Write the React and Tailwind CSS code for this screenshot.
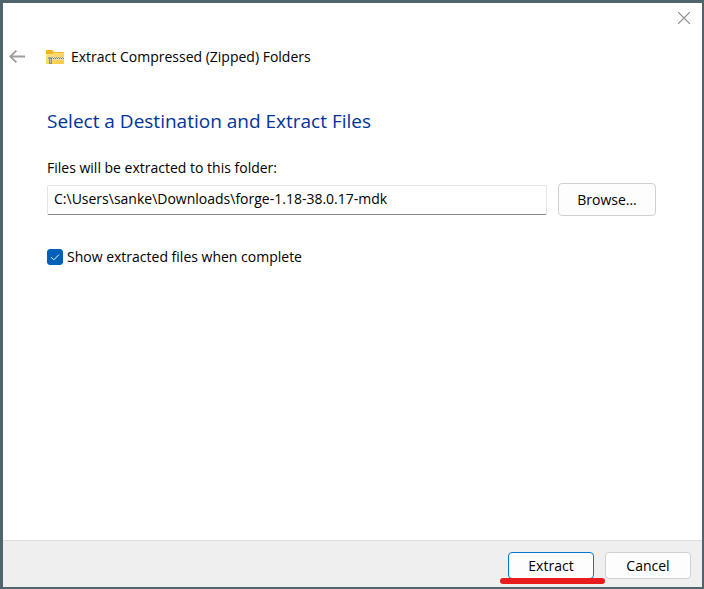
import React, { useState } from "react";

const ZipFolderIcon = () => (
  <svg width="18" height="15" viewBox="0 0 18 15" aria-hidden="true">
    <defs>
      <linearGradient id="folderFront" x1="0" y1="0" x2="1" y2="1">
        <stop offset="0" stopColor="#ffe38c" />
        <stop offset="1" stopColor="#fdc83c" />
      </linearGradient>
    </defs>
    <path d="M0 1Q0 0 1 0H6L8 2H17Q18 2 18 3V6H0Z" fill="#f3b226" />
    <path d="M0 4H6L8 3H18V13Q18 14 17 14H1Q0 14 0 13Z" fill="url(#folderFront)" />
    <path d="M6 7H18V10H6Z" fill="#e6dcb8" />
    <path d="M6 7.5H18" stroke="#a39c86" strokeWidth="1" strokeDasharray="1 1" />
    <path d="M7 8.5H18" stroke="#77746c" strokeWidth="1" strokeDasharray="1 1" />
    <path d="M2 7H6V9H2Z" fill="#a5a5a5" />
    <path d="M3 8H6V14H3Z" fill="#8b8b8b" />
    <path d="M4 9H5V13H4Z" fill="#c4c4c4" />
  </svg>
);

const BackArrow = () => (
  <svg width="16" height="14" viewBox="0 0 16 14" fill="none" stroke="#9d9d9d" strokeWidth="1.8" aria-hidden="true">
    <path d="M7.4.6L1.2 6.5L7.4 12.4M1.2 6.5H16" />
  </svg>
);

const CloseIcon = () => (
  <svg width="12" height="12" viewBox="0 0 12 12" fill="none" stroke="#8a8a8a" strokeWidth="1.2" aria-hidden="true">
    <path d="M0 0L12 12M12 0L0 12" />
  </svg>
);

const App = () => {
  const [folder, setFolder] = useState("C:\\Users\\sanke\\Downloads\\forge-1.18-38.0.17-mdk");
  const [showFiles, setShowFiles] = useState(true);

  return (
    <div className="min-h-screen flex flex-col bg-white text-black border-t-3 border-l-3 border-r-2 border-b-2 border-[#50646b] font-['Open_Sans','Noto_Sans',sans-serif] text-sm leading-5">
      {/* Title bar */}
      <div className="flex justify-end px-[11px] pt-2">
        <button aria-label="Close" className="p-px">
          <CloseIcon />
        </button>
      </div>
      <header className="flex items-center pl-1.5 pt-[22px]">
        <button aria-label="Back" className="w-4 mr-[21px]">
          <BackArrow />
        </button>
        <ZipFolderIcon />
        <h1 className="ml-[7px]">Extract Compressed (Zipped) Folders</h1>
      </header>

      <main className="flex-1 pl-11 pr-[46px] pt-10">
        <h2 className="text-[19px] leading-7 text-[#003399]">Select a Destination and Extract Files</h2>
        <label htmlFor="folder" className="block mt-[23px]">
          Files will be extracted to this folder:
        </label>
        <div className="flex items-center gap-[11px] mt-[5px]">
          <input
            id="folder"
            type="text"
            value={folder}
            onChange={(e) => setFolder(e.target.value)}
            className="flex-1 min-w-0 h-[30px] px-1.5 pb-0.5 bg-white border border-[#e5e5e5] border-b-[#868686] rounded-xs outline-none"
          />
          <button className="w-[98px] h-[33px] bg-[#fdfdfd] border border-[#d0d0d0] rounded">Browse...</button>
        </div>

        <label className="flex items-center gap-1 mt-[31px] w-fit">
          <span className="relative grid size-4">
            <input
              type="checkbox"
              checked={showFiles}
              onChange={(e) => setShowFiles(e.target.checked)}
              className="peer appearance-none size-4 rounded-[3px] border border-[#868686] checked:border-[#005fb8] checked:bg-[#005fb8]"
            />
            <svg
              viewBox="0 0 16 16"
              className="absolute inset-0 size-4 pointer-events-none opacity-0 peer-checked:opacity-100"
              fill="none"
              stroke="#ffffff"
              strokeWidth="1"
              aria-hidden="true"
            >
              <path d="M4.2 8.3L6.8 10.8L12 5.6" />
            </svg>
          </span>
          Show extracted files when complete
        </label>
      </main>

      <footer className="flex justify-end gap-[11px] pt-[11px] pb-2 pr-[11px] bg-[#efefef] border-t border-[#dfdfdf]">
        <div className="relative">
          <button className="block w-[86px] h-[27px] bg-[#fdfdfd] border border-[#0078d4] rounded">Extract</button>
          {/* Red marker under the button */}
          <span className="absolute -left-2 top-[26px] w-[105px] h-1.5 rounded-full bg-[#e81c1c]" />
        </div>
        <button className="w-[86px] h-[27px] bg-[#fdfdfd] border border-[#d0d0d0] rounded">Cancel</button>
      </footer>
    </div>
  );
};

export default App;
